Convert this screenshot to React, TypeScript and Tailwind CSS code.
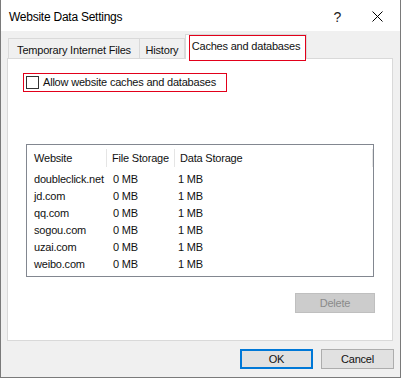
const font = "font-['Liberation_Sans',Arial,sans-serif]";

const sites = [
  { name: "doubleclick.net", file: "0 MB", data: "1 MB" },
  { name: "jd.com", file: "0 MB", data: "1 MB" },
  { name: "qq.com", file: "0 MB", data: "1 MB" },
  { name: "sogou.com", file: "0 MB", data: "1 MB" },
  { name: "uzai.com", file: "0 MB", data: "1 MB" },
  { name: "weibo.com", file: "0 MB", data: "1 MB" },
];

function TitleBar() {
  return (
    <div className="flex h-[31px] items-center bg-white pt-[2px]">
      <span className="ml-[8px] text-[12px] tracking-[-0.25px] text-black">Website Data Settings</span>
      <span className="ml-auto mr-[31px] text-[14px] leading-none text-[#222]">?</span>
      <svg width="11" height="11" viewBox="0 0 11 11" className="mr-[17px]">
        <path d="M0.5 0.5 L10.5 10.5 M10.5 0.5 L0.5 10.5" stroke="#000" strokeWidth="1" />
      </svg>
    </div>
  );
}

function Tabs() {
  return (
    <div className="flex h-[24px] items-end pl-[1px]">
      <div className="flex h-[20px] w-[132px] items-center justify-center border border-b-0 border-[#d9d9d9] bg-[#f0f0f0] pt-[3px]">
        Temporary Internet Files
      </div>
      <div className="flex h-[20px] w-[45px] items-center justify-center border border-b-0 border-l-0 border-[#d9d9d9] bg-[#f0f0f0] pt-[3px]">
        History
      </div>
      <div className="relative z-10 -mb-[1px] flex h-[25px] w-[122px] items-center justify-center border border-b-0 border-[#d9d9d9] bg-white pb-[1px]">
        Caches and databases
        <div className="absolute left-[3px] top-[0px] h-[26px] w-[117px] border border-[#e2001a]" />
      </div>
    </div>
  );
}

function SiteList() {
  return (
    <div className="h-[133px] w-[348px] border border-[#828790] bg-white">
      <div className="flex h-[26px] items-center">
        <div className="flex h-[18px] w-[80px] items-center border-r border-[#e5e5e5] pl-[7px]">Website</div>
        <div className="flex h-[18px] w-[68px] items-center border-r border-[#e5e5e5] pl-[5px]">File Storage</div>
        <div className="flex h-[18px] flex-1 items-center border-r border-[#e5e5e5] pl-[5px]">Data Storage</div>
      </div>
      {sites.map((s) => (
        <div key={s.name} className="flex h-[17px] items-center">
          <div className="w-[80px] pl-[7px]">{s.name}</div>
          <div className="w-[68px] pl-[6px]">{s.file}</div>
          <div className="flex-1 pl-[3px]">{s.data}</div>
        </div>
      ))}
    </div>
  );
}

export default function App() {
  return (
    <div className={`h-[379px] w-[402px] bg-white text-[11px] tracking-[-0.2px] text-[#111] ${font}`}>
      <div className="flex h-[378px] w-[401px] flex-col border-x border-b border-[#7a7a7a] bg-[#f0f0f0]">
        <TitleBar />
        <div className="flex flex-1 flex-col px-[6px] pt-[3px]">
          <Tabs />
          <div className="flex h-[283px] w-[386px] flex-col border border-[#d9d9d9] bg-white px-[18px]">
            <div className="ml-[-3px] mt-[14px] flex h-[19px] w-[204px] items-center border border-[#e2001a] pl-[2px]">
              <span className="h-[13px] w-[13px] border border-[#333333] bg-white" />
              <span className="ml-[4px]">Allow website caches and databases</span>
            </div>
            <div className="mt-[52px]">
              <SiteList />
            </div>
            <div className="mr-[-1px] mt-[16px] flex justify-end">
              <div className="flex h-[20px] w-[80px] items-center justify-center border border-[#bfbfbf] bg-[#cccccc] text-[#8a8a8a]">
                Delete
              </div>
            </div>
          </div>
          <div className="mt-[8px] flex justify-end gap-[8px]">
            <button className="flex h-[20px] w-[73px] items-center justify-center border-2 border-[#0078d7] bg-[#e1e1e1]">
              OK
            </button>
            <button className="flex h-[20px] w-[73px] items-center justify-center border border-[#adadad] bg-[#e1e1e1]">
              Cancel
            </button>
          </div>
        </div>
      </div>
    </div>
  );
}
